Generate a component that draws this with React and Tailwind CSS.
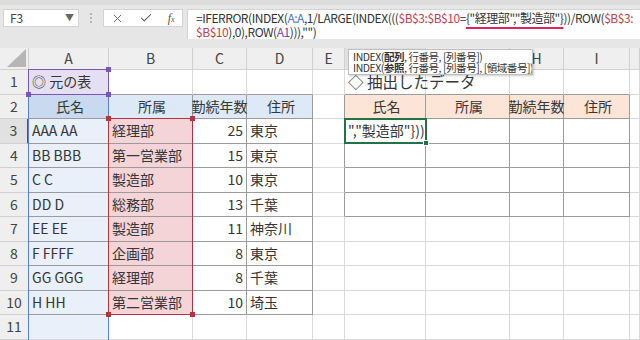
import React from 'react';
import { X, Check } from 'lucide-react';

const COLS = ['A', 'B', 'C', 'D', 'E', 'F', 'G', 'H', 'I', ''];

const DATA = [
  ['AAA AA', '経理部', '25', '東京'],
  ['BB BBB', '第一営業部', '15', '東京'],
  ['C C', '製造部', '10', '東京'],
  ['DD D', '総務部', '13', '千葉'],
  ['EE EE', '製造部', '11', '神奈川'],
  ['F FFFF', '企画部', '8', '東京'],
  ['GG GGG', '経理部', '8', '千葉'],
  ['H HH', '第二営業部', '10', '埼玉'],
];

// bordered ranges A2:D10 and F2:I6
const inTable = (r, c) =>
  (r >= 2 && r <= 10 && c >= 1 && c <= 4) || (r >= 2 && r <= 6 && c >= 6 && c <= 9);

const cellBg = (r, c) => {
  if (c === 1 && r === 1) return 'bg-[#e4dff2]';
  if (c === 1 && r === 2) return 'bg-[#c8d9f0]';
  if (c === 1) return 'bg-[#e9f0fa]';
  if (r === 2 && c >= 2 && c <= 4) return 'bg-[#dde9f6]';
  if (c === 2 && r >= 3 && r <= 10) return 'bg-[#f5d4d8]';
  if (r === 2 && c >= 6 && c <= 9) return 'bg-[#fce4d6]';
  return 'bg-white';
};

const cellText = (r, c) => {
  if (r === 1 && c === 1) return { t: '◎ 元の表', cls: 'text-[14.5px]' };
  if (r === 1 && c === 6) return { t: '◇ 抽出したデータ', cls: 'text-[15.5px]' };
  if (r === 2) {
    const h = { 1: '氏名', 2: '所属', 3: '勤続年数', 4: '住所', 6: '氏名', 7: '所属', 8: '勤続年数', 9: '住所' }[c];
    if (!h) return null;
    return { t: h, cls: c === 3 || c === 8 ? 'justify-center !pl-0 text-[12px]' : 'justify-center' };
  }
  if (r === 3 && c === 6) return { t: '","製造部"}))', cls: '' };
  if (r >= 3 && r <= 10 && c >= 1 && c <= 4) {
    const v = DATA[r - 3][c - 1];
    return { t: v, cls: c === 3 ? 'justify-end pr-[3px]' : '' };
  }
  return null;
};

const Cell = ({ r, c }) => {
  const darkR = inTable(r, c) || inTable(r, c + 1);
  const darkB = inTable(r, c) || inTable(r + 1, c);
  const txt = cellText(r, c);
  return (
    <div
      className={`flex items-center border-r border-b ${darkR ? 'border-r-[#9b9b9b]' : 'border-r-[#dadada]'} ${darkB ? 'border-b-[#9b9b9b]' : 'border-b-[#dadada]'} ${cellBg(r, c)}`}
    >
      {txt && (
        <div className={`relative z-10 flex w-full items-center whitespace-nowrap pl-[3px] text-[14px] text-[#363636] ${txt.cls}`}>
          {txt.t}
        </div>
      )}
    </div>
  );
};

const Handle = ({ pos, color }) => (
  <div className={`absolute h-[5px] w-[5px] ${color} ${pos}`} />
);

const App = () => {
  const rows = Array.from({ length: 11 }, (_, i) => i + 1);

  return (
    <div className="relative h-[340px] w-[640px] overflow-hidden bg-[#e6e6e6] font-['Noto_Sans_CJK_JP',sans-serif] text-[#333]">
      {/* FORMULA BAR */}
      <div className="h-[48px] border-t-[5px] border-[#dcdcdc]">
        <div className="flex items-start pt-[4px]">
          <div className="ml-[3px] flex h-[18px] w-[76px] items-center justify-between border border-[#d4d4d4] bg-white pl-[6px] pr-[4px] text-[12px] text-[#444]">
            <span>F3</span>
            <span className="text-[9px] text-[#666]">▼</span>
          </div>
          <div className="flex h-[18px] w-[24px] flex-col items-center justify-center gap-[2px]">
            <div className="h-[2px] w-[2px] bg-[#b5b5b5]" />
            <div className="h-[2px] w-[2px] bg-[#b5b5b5]" />
            <div className="h-[2px] w-[2px] bg-[#b5b5b5]" />
          </div>
          <div className="flex h-[18px] w-[80px] items-center justify-around border border-[#d4d4d4] bg-white text-[#555]">
            <X size={13} strokeWidth={1.6} />
            <Check size={14} strokeWidth={1.8} />
            <span className="font-['Liberation_Serif',serif] text-[12px] italic leading-none">
              f<span className="text-[8px]">x</span>
            </span>
          </div>
          <div className="ml-[4px] h-[30px] flex-1 border-l border-t border-[#d4d4d4] bg-white pl-[8px] pt-[1px] text-[12px] leading-[14px] tracking-[-0.45px] text-[#333]">
            <div className="whitespace-nowrap">
              =IFERROR(INDEX(<span className="text-[#4a6fd0]">A:A</span>,1/LARGE(INDEX(((
              <span className="text-[#c0404f]">$B$3:$B$10</span>=
              <span className="underline decoration-[#e2245e] decoration-2 underline-offset-[4px]">{'{"経理部","製造部"}'}</span>
              ))/ROW(<span className="text-[#c0404f]">$B$3:</span>
            </div>
            <div className="whitespace-nowrap">
              <span className="text-[#c0404f]">$B$10</span>),0),ROW(<span className="text-[#7a3fb0]">A1</span>))),"")
            </div>
          </div>
        </div>
      </div>

      {/* SHEET */}
      <div className="relative">
        {/* column headers */}
        <div className="grid h-[22px] grid-cols-[29px_80px_84px_54px_66px_32px_81px_84px_54px_66px_10px] bg-[#efefef] text-[14px] text-[#444]">
          <div className="relative border-b border-r border-[#d0d0d0]">
            <svg className="absolute bottom-[2px] right-[2px]" width="19" height="18" viewBox="0 0 19 18">
              <polygon points="19,0 19,18 0,18" fill="#b6b6b6" />
            </svg>
          </div>
          {COLS.map((c) => (
            <div
              key={c || 'J'}
              className={`flex items-center justify-center border-b border-r border-[#d0d0d0] ${c === 'F' ? 'bg-[#e1e1e1]' : ''}`}
            >
              {c}
            </div>
          ))}
        </div>

        {/* rows */}
        {rows.map((r) => (
          <div
            key={r}
            className="grid h-[24.5px] grid-cols-[29px_80px_84px_54px_66px_32px_81px_84px_54px_66px_10px]"
          >
            <div
              className={`flex items-center justify-center border-b border-r text-[14px] text-[#444] ${r === 3 ? 'border-r-2 border-b-[#d0d0d0] border-r-[#217346] bg-[#e1e1e1]' : 'border-[#d0d0d0] bg-[#efefef]'}`}
            >
              {r}
            </div>
            {[1, 2, 3, 4, 5, 6, 7, 8, 9, 10].map((c) => (
              <Cell key={c} r={r} c={c} />
            ))}
          </div>
        ))}

        {/* A:A range */}
        <div className="pointer-events-none absolute left-[28px] top-[21px] z-20 h-[275px] w-[81px] border border-[#5b7fd0]" />

        {/* A1 range */}
        <div className="pointer-events-none absolute left-[28px] top-[21px] z-20 h-[26px] w-[81px] border border-[#7d55b8]">
          <Handle pos="-right-[3px] -top-[3px]" color="bg-[#7d55b8]" />
          <Handle pos="-left-[3px] -bottom-[3px]" color="bg-[#7d55b8]" />
          <Handle pos="-right-[3px] -bottom-[3px]" color="bg-[#7d55b8]" />
        </div>

        {/* B3:B10 range */}
        <div className="pointer-events-none absolute left-[108px] top-[70px] z-20 h-[197px] w-[85px] border border-[#b8313f]">
          <Handle pos="-left-[3px] -top-[3px]" color="bg-[#b8313f]" />
          <Handle pos="-right-[3px] -top-[3px]" color="bg-[#b8313f]" />
          <Handle pos="-left-[3px] -bottom-[3px]" color="bg-[#b8313f]" />
          <Handle pos="-right-[3px] -bottom-[3px]" color="bg-[#b8313f]" />
        </div>

        {/* F3 selection */}
        <div className="pointer-events-none absolute left-[344px] top-[70px] z-20 h-[26px] w-[83px] border-2 border-[#217346]">
          <div className="absolute -bottom-[4px] -right-[4px] h-[6px] w-[6px] border border-white bg-[#217346]" />
        </div>

        {/* function tooltip */}
        <div className="absolute left-[348px] top-[1px] z-30 w-[185px] overflow-hidden border border-[#bfbfbf] bg-white px-[4px] py-[1px] text-[10.5px] leading-[11px] tracking-[-0.45px] text-[#333] shadow-[1px_1px_2px_rgba(0,0,0,0.2)]">
          <div className="whitespace-nowrap">
            INDEX(<span className="font-bold">配列</span>, 行番号, [列番号])
          </div>
          <div className="whitespace-nowrap">
            INDEX(<span className="font-bold">参照</span>, 行番号, [列番号], [領域番号])
          </div>
        </div>
      </div>
    </div>
  );
};

export default App;
